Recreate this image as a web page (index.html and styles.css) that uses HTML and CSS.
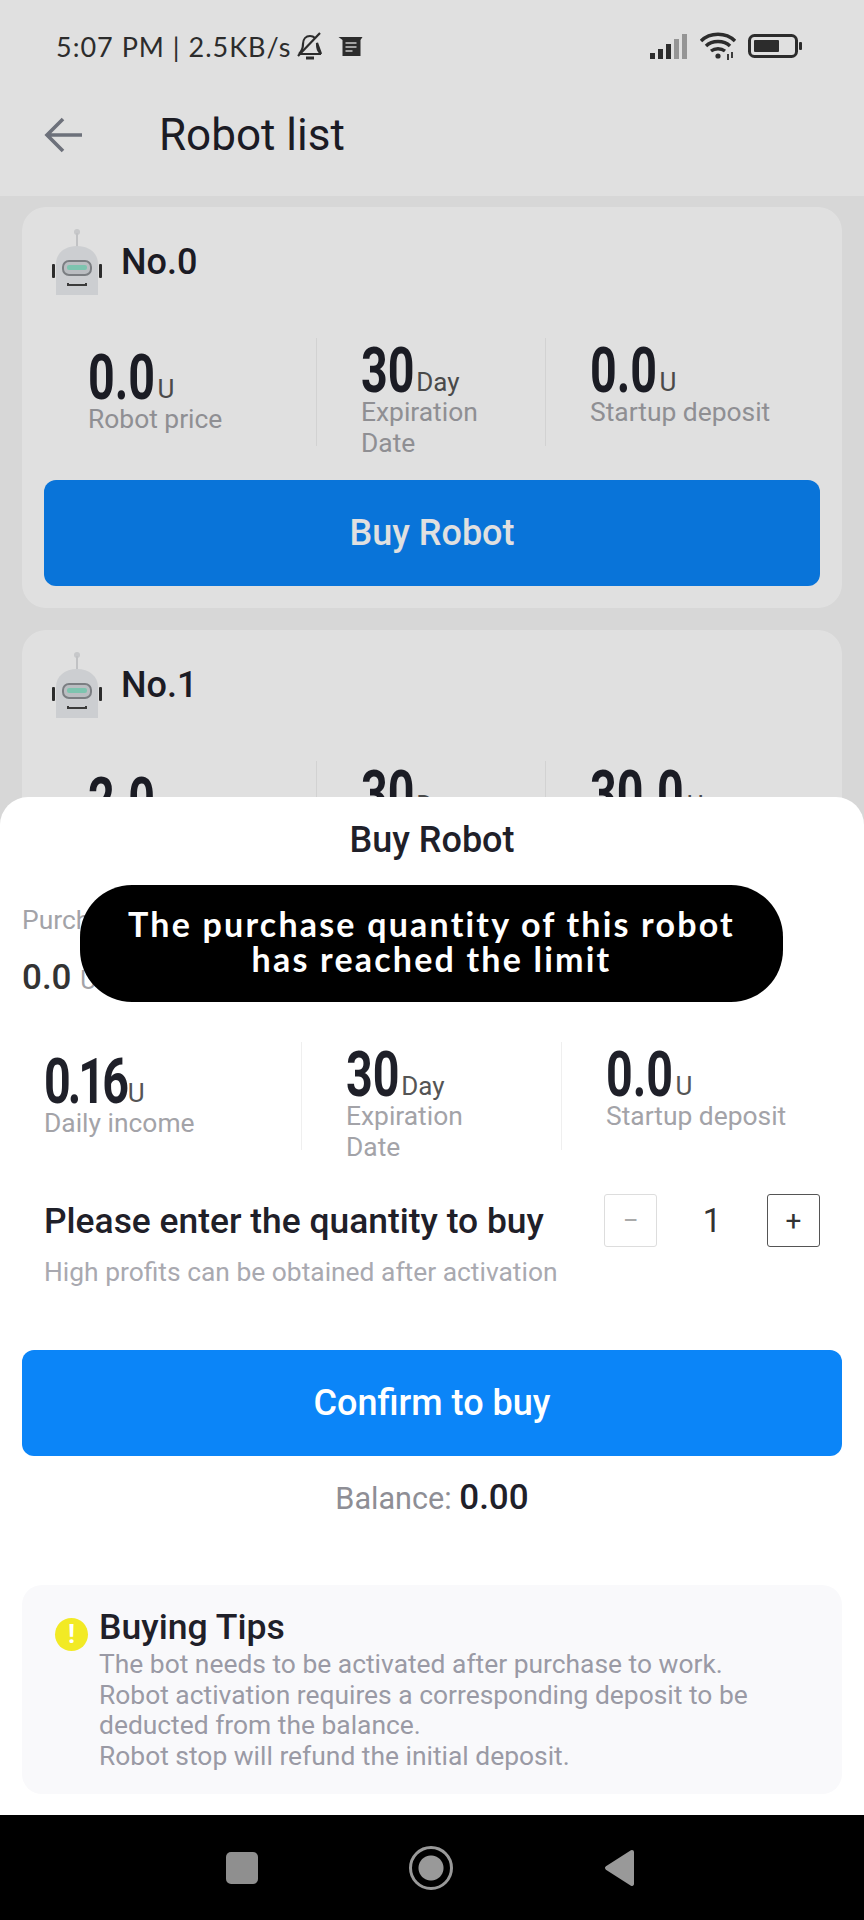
FILE: index.html

```html
<!DOCTYPE html>
<html lang="en">
<head>
  <meta charset="UTF-8" />
  <meta name="viewport" content="width=device-width, initial-scale=1.0"/>
  <title>Robot list</title>
  <link rel="stylesheet" href="styles.css">
</head>
<body>
  <svg class="defs" width="0" height="0">
    <symbol id="robot" viewBox="0 0 51 67">
      <circle cx="26" cy="4" r="3" fill="#e3e4e6"/>
      <rect x="25" y="5" width="2" height="16" fill="#dcdde0"/>
      <path d="M5 67V36C5 25 14 18 26 18s21 7 21 18v31z" fill="#e9ebee"/>
      <rect x="1" y="36" width="3" height="14" rx="1" fill="#333"/>
      <rect x="48" y="36" width="3" height="14" rx="1" fill="#333"/>
      <rect x="12" y="33" width="28" height="14" rx="6" fill="#d4d8dc" stroke="#8c9095" stroke-width="2"/>
      <rect x="16" y="37" width="20" height="5" rx="2" fill="#8fe0c8"/>
      <path d="M17 55v2h18v-2" fill="none" stroke="#444" stroke-width="2"/>
    </symbol>
  </svg>

  <div class="screen">
    <div class="status-bar">
      <span class="status-text">5:07 PM | 2.5KB/s</span>
      <svg class="bell" width="28" height="30" viewBox="0 0 28 30" fill="none" stroke="#333" stroke-width="2.2">
        <path d="M3 23c3-3 4-5 4-10 0-5 3-8 7-8 2 0 4 1 5 2M21 12c0 6 1 8 4 11zM3 23h22"/>
        <path d="M2 25L24 2"/>
        <path d="M10 27h8" stroke-width="3"/>
      </svg>
      <svg class="note" width="25" height="19" viewBox="0 0 24 19">
        <path d="M0 0h24l-2 3v16H4V3z" fill="#333"/>
        <path d="M7 6h11M7 10h11M7 14h7" stroke="#e8e8e8" stroke-width="1.6"/>
      </svg>
      <span class="status-right">
        <svg width="38" height="25" viewBox="0 0 38 25">
          <rect x="0" y="19" width="5" height="6" fill="#333"/>
          <rect x="8" y="15" width="5" height="10" fill="#333"/>
          <rect x="16" y="10" width="5" height="15" fill="#333"/>
          <rect x="24" y="5" width="5" height="20" fill="#aaa"/>
          <rect x="32" y="0" width="5" height="25" fill="#aaa"/>
        </svg>
        <svg width="38" height="28" viewBox="0 0 38 28" fill="none" stroke="#333" stroke-width="3.4">
          <path d="M2 9c9-9 25-9 34 0"/>
          <path d="M7 14c6-6 18-6 24 0"/>
          <path d="M12 19c4-3 10-3 14 0"/>
          <circle cx="19" cy="24" r="2.6" fill="#333" stroke="none"/>
          <path d="M29 22v6M33 20v6" stroke-width="1.8"/>
        </svg>
        <svg width="55" height="24" viewBox="0 0 55 24" fill="none">
          <rect x="1.5" y="1.5" width="47" height="21" rx="5" stroke="#333" stroke-width="3"/>
          <rect x="6" y="6" width="25" height="12" rx="1" fill="#333"/>
          <rect x="51" y="8" width="3" height="8" rx="1" fill="#333"/>
        </svg>
      </span>
    </div>

    <header class="app-bar">
      <svg class="back" width="38" height="36" viewBox="0 0 38 36" fill="none" stroke="#7d818c" stroke-width="3.6">
        <path d="M19 2L3 18l16 16M3 18h35"/>
      </svg>
      <h1>Robot list</h1>
    </header>

    <main class="list">
      <section class="card">
        <div class="card-head">
          <svg class="robot" width="51" height="67"><use href="#robot"/></svg>
          <span class="card-name">No.0</span>
        </div>
        <div class="stats">
          <div class="stat stat-1"><div class="num"><span class="digits d3">0.0</span><small>U</small></div><div class="label">Robot price</div></div>
          <i class="divider"></i>
          <div class="stat stat-2"><div class="num"><span class="digits d2">30</span><small>Day</small></div><div class="label">Expiration<br>Date</div></div>
          <i class="divider"></i>
          <div class="stat stat-3"><div class="num"><span class="digits d3">0.0</span><small>U</small></div><div class="label">Startup deposit</div></div>
        </div>
        <button class="btn">Buy Robot</button>
      </section>

      <section class="card">
        <div class="card-head">
          <svg class="robot" width="51" height="67"><use href="#robot"/></svg>
          <span class="card-name">No.1</span>
        </div>
        <div class="stats">
          <div class="stat stat-1"><div class="num"><span class="digits d3">2.0</span><small>U</small></div></div>
          <i class="divider"></i>
          <div class="stat stat-2"><div class="num"><span class="digits d2">30</span><small>Day</small></div></div>
          <i class="divider"></i>
          <div class="stat stat-3"><div class="num"><span class="digits d4">30.0</span><small>U</small></div></div>
        </div>
      </section>
    </main>

    <div class="scrim"></div>

    <div class="sheet">
      <h2 class="sheet-title">Buy Robot</h2>
      <div class="price-label">Purchase price</div>
      <div class="price">0.0 <small>U</small></div>

      <div class="stats">
        <div class="stat stat-1"><div class="num"><span class="digits d4 tight">0.16</span><small>U</small></div><div class="label">Daily income</div></div>
        <i class="divider"></i>
        <div class="stat stat-2"><div class="num"><span class="digits d2">30</span><small>Day</small></div><div class="label">Expiration<br>Date</div></div>
        <i class="divider"></i>
        <div class="stat stat-3"><div class="num"><span class="digits d3">0.0</span><small>U</small></div><div class="label">Startup deposit</div></div>
      </div>

      <div class="qty">
        <div class="qty-text">
          <div class="qty-title">Please enter the quantity to buy</div>
          <div class="qty-sub">High profits can be obtained after activation</div>
        </div>
        <div class="stepper">
          <span class="step step-off">&minus;</span>
          <span class="step-value">1</span>
          <span class="step">+</span>
        </div>
      </div>

      <button class="btn btn-confirm">Confirm to buy</button>
      <div class="balance">Balance: <b>0.00</b></div>

      <div class="tips">
        <span class="tips-icon">!</span>
        <div>
          <div class="tips-title">Buying Tips</div>
          <p>The bot needs to be activated after purchase to work.<br>
          Robot activation requires a corresponding deposit to be deducted from the balance.<br>
          Robot stop will refund the initial deposit.</p>
        </div>
      </div>
    </div>

    <div class="toast">The purchase quantity of this robot<br>has reached the limit</div>

    <nav class="nav-bar">
      <span class="nav-square"></span>
      <span class="nav-circle"></span>
      <svg width="32" height="38" viewBox="0 0 32 38"><path d="M28 3L3 19l25 16z" fill="#999" stroke="#999" stroke-width="4" stroke-linejoin="round"/></svg>
    </nav>
  </div>
</body>
</html>
```

FILE: styles.css

```css
* {
  box-sizing: border-box;
}
body {
  margin: 0;
  font-family: Roboto, "Liberation Sans", sans-serif;
  color: #1f2029;
}
.defs {
  position: absolute;
}
.screen {
  position: relative;
  width: 864px;
  height: 1920px;
  overflow: hidden;
  background: #f5f5f5;
}
.status-bar {
  display: flex;
  align-items: center;
  height: 92px;
  padding: 0 61px 0 56px;
  background: #fff;
}
.status-text {
  font-family: Lato, sans-serif;
  font-size: 27px;
  letter-spacing: 1px;
  color: #333;
  white-space: nowrap;
}
.bell {
  margin-left: 5px;
}
.note {
  margin-left: 14px;
}
.status-right {
  display: flex;
  align-items: center;
  gap: 11px;
  margin-left: auto;
}
.app-bar {
  display: flex;
  align-items: center;
  height: 104px;
  padding: 0 0 18px 44px;
  background: #fff;
}
.app-bar h1 {
  margin: 0 0 0 77px;
  font-size: 44px;
  font-weight: 400;
}
.list {
  display: flex;
  flex-direction: column;
  gap: 22px;
  height: 629px;
  padding: 11px 22px;
  overflow: hidden;
}
.card {
  flex: none;
  padding: 21px 22px 22px;
  background: #fff;
  border-radius: 24px;
}
.card-head {
  display: flex;
  align-items: center;
  gap: 19px;
  padding-left: 7px;
  margin-bottom: 50px;
}
.robot {
  display: block;
}
.card-name {
  font-size: 36px;
  font-weight: 500;
}
.stats {
  display: flex;
  align-items: flex-start;
}
.stat {
  flex: none;
  padding-left: 45px;
}
.stat-1 {
  padding-top: 7px;
}
.card .stat-1 {
  width: 272px;
  padding-left: 44px;
}
.card .stat-2 {
  width: 229px;
}
.sheet .stat-1 {
  width: 279px;
  padding-left: 22px;
}
.sheet .stat-2 {
  width: 260px;
}
.divider {
  flex: none;
  width: 1px;
  height: 108px;
  margin-top: -7px;
  margin-right: -1px;
  background: #efefef;
}
.num {
  height: 50px;
  font-size: 63px;
  font-weight: 700;
  line-height: 50px;
  white-space: nowrap;
}
/* no condensed face installed, so the big digits are squeezed by hand */
.digits {
  display: inline-block;
  transform: translateY(1px) scaleX(0.74);
  transform-origin: left center;
}
.d2 {
  margin-right: -19px;
}
.d3 {
  margin-right: -23px;
}
.d4 {
  margin-right: -32px;
}
.tight {
  letter-spacing: -4px;
  margin-right: -29px;
}
.num small {
  margin-left: 2px;
  font-size: 26px;
  font-weight: 400;
  color: #555;
}
.label {
  margin-top: 2px;
  font-size: 26.4px;
  line-height: 31px;
  color: #a3a3a8;
  white-space: nowrap;
}
.btn {
  display: block;
  width: 100%;
  height: 106px;
  margin-top: 21px;
  padding: 0;
  border: none;
  border-radius: 12px;
  background: #0b85f8;
  color: #fff;
  font-family: inherit;
  font-size: 36px;
  font-weight: 500;
}
.scrim {
  position: absolute;
  inset: 0;
  background: rgba(0, 0, 0, 0.12);
}
.sheet {
  position: absolute;
  left: 0;
  right: 0;
  top: 797px;
  height: 1018px;
  padding: 0 22px;
  background: #fff;
  border-radius: 28px 28px 0 0;
}
.sheet-title {
  margin: 21px 0 0;
  font-size: 36px;
  font-weight: 500;
  line-height: 44px;
  text-align: center;
}
.price-label {
  margin-top: 38px;
  font-size: 26.4px;
  line-height: 40px;
  color: #a3a3a8;
}
.price {
  margin: 16px 0 46px;
  font-size: 35px;
  font-weight: 500;
  line-height: 44px;
  color: #333;
}
.price small {
  font-size: 25px;
  font-weight: 400;
  color: #a3a3a8;
}
.sheet .stats {
  height: 114px;
}
.qty {
  display: flex;
  justify-content: space-between;
  padding: 0 22px;
  margin-top: 29px;
}
.qty-title {
  margin-top: 7px;
  font-size: 35.4px;
  font-weight: 500;
  line-height: 44px;
  white-space: nowrap;
}
.qty-sub {
  margin-top: 9px;
  font-size: 26.4px;
  line-height: 40px;
  color: #a9a9b0;
  white-space: nowrap;
}
.stepper {
  display: flex;
  align-items: center;
  justify-content: space-between;
  width: 216px;
  height: 53px;
  margin-top: 2px;
}
.step {
  display: flex;
  align-items: center;
  justify-content: center;
  width: 53px;
  height: 53px;
  border: 1px solid #555;
  border-radius: 3px;
  font-size: 28px;
  color: #333;
}
.step-off {
  border-color: #ddd;
  color: #aaa;
}
.step-value {
  font-size: 33px;
  color: #333;
}
.btn-confirm {
  margin-top: 58px;
}
.balance {
  margin-top: 22px;
  font-size: 30.6px;
  line-height: 40px;
  text-align: center;
  color: #8e8e95;
}
.balance b {
  font-size: 35px;
  font-weight: 500;
  color: #1f2029;
}
.tips {
  display: flex;
  align-items: flex-start;
  gap: 11px;
  height: 209px;
  margin-top: 66px;
  padding: 20px 33px;
  background: #f9f9fb;
  border-radius: 20px;
}
.tips-icon {
  flex: none;
  width: 33px;
  height: 33px;
  margin-top: 13px;
  border-radius: 50%;
  background: #f2ea25;
  color: #fff;
  font-size: 26px;
  font-weight: 700;
  line-height: 33px;
  text-align: center;
}
.tips-title {
  font-size: 35.6px;
  font-weight: 500;
  line-height: 44px;
}
.tips p {
  margin: 0;
  font-size: 26.4px;
  line-height: 30.7px;
  color: #9a9aa5;
}
.toast {
  position: absolute;
  left: 80px;
  top: 885px;
  width: 703px;
  height: 117px;
  padding: 21px 0;
  border-radius: 52px;
  background: #000;
  color: #fff;
  font-family: Lato, sans-serif;
  font-size: 34px;
  font-weight: 700;
  letter-spacing: 2.2px;
  line-height: 35px;
  text-align: center;
}
.nav-bar {
  position: absolute;
  left: 0;
  right: 0;
  bottom: 0;
  display: flex;
  align-items: center;
  height: 105px;
  padding-left: 226px;
  background: #000;
}
.nav-square {
  width: 32px;
  height: 32px;
  margin-right: 151px;
  border-radius: 5px;
  background: #8f8f8f;
}
.nav-circle {
  width: 44px;
  height: 44px;
  margin-right: 151px;
  border: 3px solid #999;
  border-radius: 50%;
  background: radial-gradient(circle, #999 0 12px, #000 13px);
}
```
